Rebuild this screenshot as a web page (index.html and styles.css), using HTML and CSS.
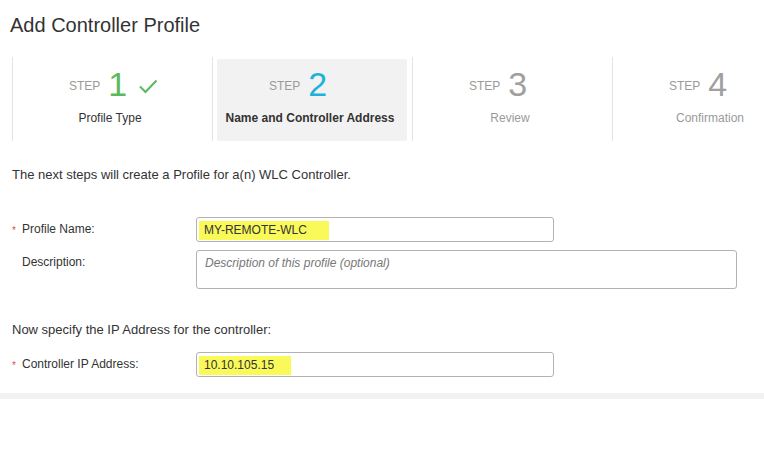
FILE: index.html
```html
<!DOCTYPE html>
<html>
<head>
<meta charset="utf-8">
<link rel="stylesheet" href="styles.css">
</head>
<body>
<h1 class="title">Add Controller Profile</h1>
<div class="steps">
  <div class="step">
    <div class="step-body">
      <div class="step-head"><span class="step-word">STEP</span><span class="step-num done">1</span><svg class="check" width="20" height="16" viewBox="0 0 20 16"><polyline points="1,8.5 6.5,14 17.5,2.5" fill="none" stroke="#5cb85c" stroke-width="2"/></svg></div>
      <div class="step-label">Profile Type</div>
    </div>
  </div>
  <div class="step">
    <div class="step-body active">
      <div class="step-head"><span class="step-word">STEP</span><span class="step-num current">2</span><span class="check"></span></div>
      <div class="step-label bold">Name and Controller Address</div>
    </div>
  </div>
  <div class="step">
    <div class="step-body">
      <div class="step-head"><span class="step-word">STEP</span><span class="step-num">3</span><span class="check"></span></div>
      <div class="step-label muted">Review</div>
    </div>
  </div>
  <div class="step">
    <div class="step-body">
      <div class="step-head"><span class="step-word">STEP</span><span class="step-num">4</span><span class="check"></span></div>
      <div class="step-label muted">Confirmation</div>
    </div>
  </div>
</div>

<p class="intro">The next steps will create a Profile for a(n) WLC Controller.</p>

<div class="form-row first">
  <div class="label"><span class="req">*</span>Profile Name:</div>
  <div class="input short"><span class="hl hl-name">MY-REMOTE-WLC</span></div>
</div>
<div class="form-row">
  <div class="label"><span class="req blank"></span>Description:</div>
  <div class="textarea">Description of this profile (optional)</div>
</div>

<p class="intro second">Now specify the IP Address for the controller:</p>

<div class="form-row ip">
  <div class="label"><span class="req">*</span>Controller IP Address:</div>
  <div class="input short"><span class="hl hl-ip">10.10.105.15</span></div>
</div>

<div class="band"></div>
</body>
</html>
```

FILE: styles.css
```css
html, body {
  margin: 0;
  padding: 0;
  background: #ffffff;
  overflow: hidden;
}
body {
  font-family: "Liberation Sans", Arial, sans-serif;
  color: #333333;
}
.title {
  margin: 0;
  padding: 13px 0 0 10px;
  font-size: 20px;
  line-height: 24px;
  font-weight: normal;
  color: #333333;
}
.steps {
  display: flex;
  margin: 20px 0 0 12px;
  height: 84px;
  overflow: hidden;
}
.step {
  flex: 0 0 199px;
  border-left: 1px solid #e3e3e3;
  display: flex;
}
.step-body {
  flex: 1;
  margin: 2px 5px 0 4px;
  padding-top: 5px;
}
.step-body.active {
  background: #f2f2f2;
}
.step-head {
  display: flex;
  align-items: center;
  height: 40px;
  padding-left: 52px;
}
.step-word {
  font-size: 12px;
  color: #9a9a9a;
  margin-right: 8px;
  margin-top: 4px;
}
.step-num {
  font-size: 34px;
  line-height: 40px;
  color: #a0a0a0;
}
.step-num.done { color: #5cb85c; }
.step-num.current { color: #1fb1da; }
.check {
  width: 20px;
  height: 16px;
  margin-left: 12px;
  margin-top: 3px;
}
.step-label {
  text-align: center;
  font-size: 12px;
  line-height: 16px;
  margin-top: 6px;
  padding-right: 4px;
  color: #333333;
}
.step-label.bold { font-weight: bold; }
.step-label.muted { color: #9a9a9a; }

.intro {
  margin: 26px 0 0 12px;
  font-size: 13px;
  line-height: 16px;
  color: #333333;
}
.intro.second {
  margin-top: 33px;
}
.form-row {
  display: flex;
  align-items: flex-start;
  margin-top: 8px;
  padding-left: 12px;
}
.form-row.first { margin-top: 34px; }
.form-row.ip { margin-top: 14px; }
.label {
  width: 184px;
  font-size: 12px;
  line-height: 25px;
  color: #333333;
  display: flex;
  align-items: center;
}
.req {
  color: #d9534f;
  width: 10px;
  font-size: 10px;
  line-height: 10px;
  margin-top: 3px;
}
.req.blank { display: inline-block; }
.input {
  box-sizing: border-box;
  height: 25px;
  border: 1px solid #b3b3b3;
  border-radius: 3px;
  padding: 2px 0 0 2px;
  background: #fff;
}
.short { width: 358px; }
.hl {
  display: inline-block;
  background: #f9f95a;
  height: 19px;
  line-height: 19px;
  font-size: 12px;
  padding-left: 5px;
  color: #333;
  box-sizing: border-box;
}
.hl-name { width: 130px; }
.hl-ip { width: 92px; }
.textarea {
  box-sizing: border-box;
  width: 541px;
  height: 39px;
  border: 1px solid #b3b3b3;
  border-radius: 3px;
  padding: 5px 8px;
  font-size: 12px;
  line-height: 14px;
  font-style: italic;
  color: #777777;
}
.band {
  margin-top: 16px;
  height: 6px;
  background: #f2f2f2;
}
```
